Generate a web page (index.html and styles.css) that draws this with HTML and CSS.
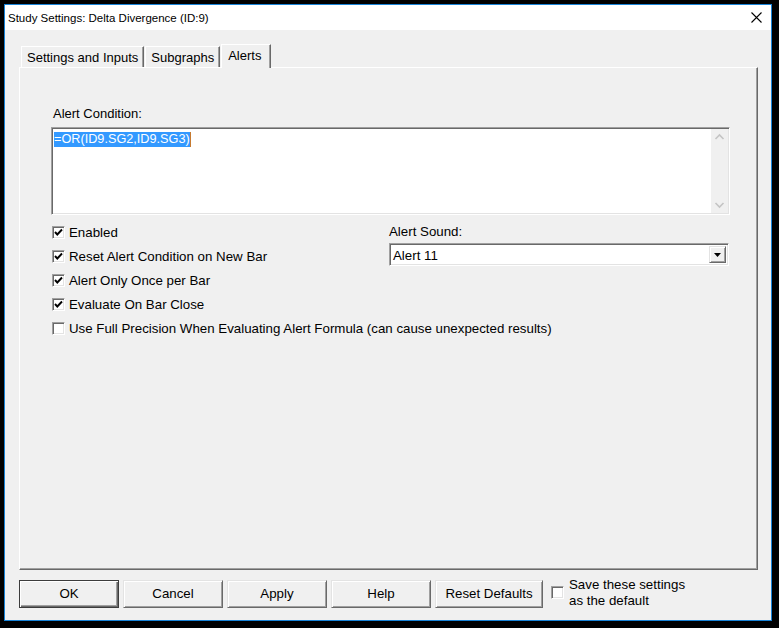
FILE: index.html
```html
<!DOCTYPE html>
<html>
<head>
<meta charset="utf-8">
<link rel="stylesheet" href="styles.css">
<title>Study Settings</title>
</head>
<body>
<div class="window">
  <div class="titlebar">
    <span class="title">Study Settings: Delta Divergence (ID:9)</span>
    <svg class="close" width="11" height="11" viewBox="0 0 11 11"><path d="M0.5 0.5 L10.5 10.5 M10.5 0.5 L0.5 10.5" stroke="#000" stroke-width="1.1" fill="none"/></svg>
  </div>
  <div class="client">
    <div class="tabs">
      <div class="tab">Settings and Inputs</div>
      <div class="tab">Subgraphs</div>
      <div class="tab active">Alerts</div>
    </div>
    <div class="panel">
      <div class="label">Alert Condition:</div>
      <div class="editbox">
        <div class="edittext"><span class="sel">=OR(ID9.SG2,ID9.SG3)</span><span class="caret"></span></div>
        <div class="vscroll">
          <svg width="17" height="17" viewBox="0 0 17 17"><path d="M4.5 10 L8.5 6 L12.5 10" stroke="#c4c4c4" stroke-width="1.6" fill="none"/></svg>
          <svg width="17" height="17" viewBox="0 0 17 17"><path d="M4.5 7 L8.5 11 L12.5 7" stroke="#c4c4c4" stroke-width="1.6" fill="none"/></svg>
        </div>
      </div>
      <div class="options">
        <div class="checks">
          <div class="row"><span class="cb"><svg width="9" height="9" viewBox="0 0 9 9"><path d="M1 4 L3.3 6.5 L8 1.5" stroke="#000" stroke-width="1.9" fill="none"/></svg></span>Enabled</div>
          <div class="row"><span class="cb"><svg width="9" height="9" viewBox="0 0 9 9"><path d="M1 4 L3.3 6.5 L8 1.5" stroke="#000" stroke-width="1.9" fill="none"/></svg></span>Reset Alert Condition on New Bar</div>
          <div class="row"><span class="cb"><svg width="9" height="9" viewBox="0 0 9 9"><path d="M1 4 L3.3 6.5 L8 1.5" stroke="#000" stroke-width="1.9" fill="none"/></svg></span>Alert Only Once per Bar</div>
          <div class="row"><span class="cb"><svg width="9" height="9" viewBox="0 0 9 9"><path d="M1 4 L3.3 6.5 L8 1.5" stroke="#000" stroke-width="1.9" fill="none"/></svg></span>Evaluate On Bar Close</div>
          <div class="row"><span class="cb"></span>Use Full Precision When Evaluating Alert Formula (can cause unexpected results)</div>
        </div>
        <div class="sound">
          <div class="soundlabel">Alert Sound:</div>
          <div class="combo">
            <span class="combotext">Alert 11</span>
            <span class="dropbtn"><svg width="7" height="4" viewBox="0 0 7 4"><path d="M0 0 H7 L3.5 4 Z" fill="#000"/></svg></span>
          </div>
        </div>
      </div>
    </div>
    <div class="buttons">
      <div class="btn default">OK</div>
      <div class="btn">Cancel</div>
      <div class="btn">Apply</div>
      <div class="btn">Help</div>
      <div class="btn wide">Reset Defaults</div>
      <div class="savedef"><span class="cb"></span><span class="savetext">Save these settings<br>as the default</span></div>
    </div>
  </div>
</div>
</body>
</html>
```

FILE: styles.css
```css
html, body {
  margin: 0;
  padding: 0;
  background: #000;
}
body {
  font-family: "Liberation Sans", Arial, sans-serif;
  font-size: 13px;
  color: #000;
  padding: 4px 0 0 4px;
}
.window {
  width: 768px;
  height: 617px;
  box-sizing: border-box;
  border: 1px solid #1883d7;
  background: #f0f0f0;
  display: flex;
  flex-direction: column;
}
.titlebar {
  height: 25px;
  background: #fff;
  display: flex;
  align-items: center;
  justify-content: space-between;
  padding: 0 9px 0 3px;
  flex: none;
}
.title {
  font-size: 11.5px;
  line-height: 14px;
}
.close {
  display: block;
}
.client {
  flex: 1;
  display: flex;
  flex-direction: column;
  padding: 14px 13px 0 14px;
}
.tabs {
  display: flex;
  align-items: flex-end;
  height: 23px;
  padding-left: 2px;
  gap: 1px;
  flex: none;
}
.tab {
  height: 21px;
  box-sizing: border-box;
  border-top: 1px solid #fff;
  border-left: 1px solid #fff;
  border-right: 1px solid #696969;
  box-shadow: inset -1px 0 #a0a0a0;
  padding: 0 5px 0 5px;
  display: flex;
  align-items: center;
  line-height: 15px;
}
.tab.active {
  height: 24px;
  margin-bottom: -1px;
  position: relative;
  z-index: 1;
  background: #f0f0f0;
  padding: 0 9px 0 6px;
  align-items: flex-start;
  padding-top: 3px;
}
.panel {
  height: 503px;
  box-sizing: border-box;
  border: 1px solid;
  border-color: #fff #696969 #696969 #fff;
  box-shadow: inset -1px -1px #a0a0a0;
  padding: 38px 27px 0 31px;
  flex: none;
}
.label {
  line-height: 16px;
  padding-left: 2px;
  margin-bottom: 5px;
}
.editbox {
  height: 88px;
  box-sizing: border-box;
  border: 1px solid;
  border-color: #a0a0a0 #fff #fff #a0a0a0;
  box-shadow: inset 1px 1px #696969, inset -1px -1px #e3e3e3;
  background: #fff;
  display: flex;
  padding: 1px 1px 1px 1px;
}
.edittext {
  flex: 1;
  padding: 3px 0 0 1px;
  line-height: 15px;
  font-size: 12.7px;
  display: flex;
  align-items: flex-start;
}
.sel {
  background: #3399ff;
  color: #fff;
}
.caret {
  width: 1px;
  height: 15px;
  background: #c67a30;
}
.vscroll {
  width: 17px;
  background: #f0f0f0;
  display: flex;
  flex-direction: column;
  justify-content: space-between;
}
.vscroll svg {
  display: block;
}
.options {
  margin-top: 5px;
  display: grid;
  grid-template-columns: 338px 340px;
}
.row {
  height: 24px;
  display: flex;
  align-items: center;
  gap: 4px;
  padding-left: 1px;
  white-space: nowrap;
  font-size: 13.3px;
}
.cb {
  width: 13px;
  height: 13px;
  box-sizing: border-box;
  border: 1px solid;
  border-color: #a0a0a0 #fff #fff #a0a0a0;
  box-shadow: inset 1px 1px #696969, inset -1px -1px #e3e3e3;
  background: #fff;
  display: flex;
  align-items: center;
  justify-content: center;
  flex: none;
}
.cb svg {
  display: block;
}
.soundlabel {
  height: 23px;
  line-height: 23px;
  font-size: 13.3px;
}
.combo {
  height: 23px;
  box-sizing: border-box;
  border: 1px solid;
  border-color: #a0a0a0 #fff #fff #a0a0a0;
  box-shadow: inset 1px 1px #696969, inset -1px -1px #e3e3e3;
  background: #fff;
  display: flex;
  align-items: stretch;
  padding: 2px 2px 2px 2px;
}
.combotext {
  flex: 1;
  padding-left: 1px;
  line-height: 19px;
  font-size: 13.3px;
}
.dropbtn {
  width: 17px;
  box-sizing: border-box;
  border: 1px solid;
  border-color: #e3e3e3 #696969 #696969 #e3e3e3;
  box-shadow: inset 1px 1px #fff, inset -1px -1px #a0a0a0;
  background: #f0f0f0;
  display: flex;
  align-items: center;
  justify-content: center;
}
.dropbtn svg {
  display: block;
}
.buttons {
  margin-top: 10px;
  display: flex;
  align-items: flex-start;
  gap: 4px;
  font-size: 13.3px;
}
.btn {
  width: 100px;
  height: 28px;
  box-sizing: border-box;
  border: 1px solid;
  border-color: #e3e3e3 #696969 #696969 #e3e3e3;
  box-shadow: inset 1px 1px #fff, inset -1px -1px #a0a0a0;
  background: #f0f0f0;
  display: flex;
  align-items: center;
  justify-content: center;
  padding-bottom: 1px;
}
.btn.default {
  border: 1px solid #3c3c3c;
  box-shadow: inset 1px 1px #fff, inset -1px -1px #696969, inset -2px -2px #a0a0a0;
}
.btn.wide {
  width: 108px;
}
.savedef {
  margin-left: 4px;
  display: flex;
  align-items: flex-start;
  gap: 5px;
}
.savedef .cb {
  margin-top: 6px;
}
.savetext {
  line-height: 16px;
  margin-top: -3px;
}
```
